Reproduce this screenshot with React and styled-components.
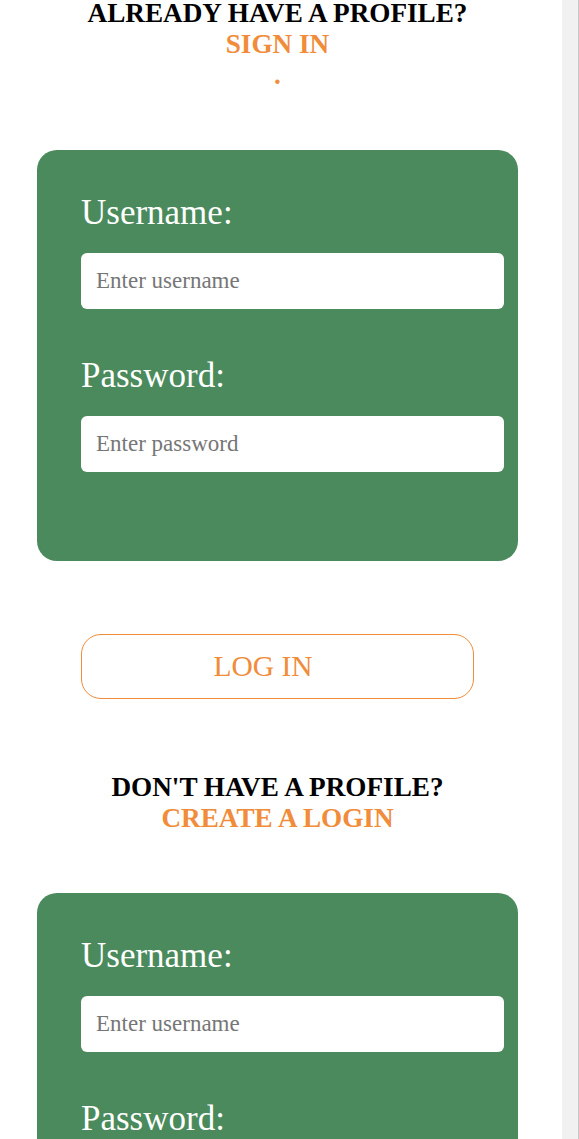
import React from "react";
import styled, { createGlobalStyle } from "styled-components";

const GlobalStyle = createGlobalStyle`
  html, body {
    margin: 0;
    padding: 0;
    background: #ffffff;
    overflow: hidden;
  }
  body {
    font-family: "Liberation Serif", "Times New Roman", serif;
  }
  * { box-sizing: border-box; }
`;

const Page = styled.div`
  display: flex;
  width: 579px;
  height: 1139px;
  overflow: hidden;
`;

const Main = styled.main`
  width: 562px;
  flex-shrink: 0;
`;

const Column = styled.div`
  width: 555px;
  display: flex;
  flex-direction: column;
  align-items: stretch;
`;

// fake scrollbar track on the right edge
const ScrollTrack = styled.div`
  width: 17px;
  flex-shrink: 0;
  background: #f1f1f1;
  border-right: 1px solid #c6c6c6;
`;

const Prompt = styled.div`
  margin-top: ${(p) => p.$top}px;
  font-size: 27.2px;
  font-weight: bold;
  text-align: center;
  color: #000000;
`;

const Question = styled.h2`
  margin: 0;
  font-size: inherit;
  line-height: 27px;
`;

const Link = styled.a`
  display: block;
  margin-top: ${(p) => (p.$gap ? 2 : 0)}px;
  line-height: 31px;
  color: #f08c3a;
  text-decoration: none;
  cursor: pointer;
`;

const Card = styled.form`
  margin: 59px 37px 0 37px;
  padding: 43px 14px 89px 44px;
  background: #4a8a5c;
  border-radius: 20px;
  display: flex;
  flex-direction: column;
`;

const Label = styled.label`
  display: block;
  font-size: 35px;
  color: #ffffff;
  margin-top: ${(p) => (p.$first ? 0 : 47)}px;
`;

const Input = styled.input`
  display: block;
  width: 100%;
  height: 56px;
  margin-top: 20px;
  padding: 0 15px;
  border: none;
  border-radius: 6px;
  background: #ffffff;
  font-family: "Liberation Serif", "Times New Roman", serif;
  font-size: 23px;
  color: #222;
  outline: none;

  &::placeholder {
    color: #767676;
  }
`;

const LoginButton = styled.button`
  margin: 73px 81px 0 81px;
  height: 65px;
  padding: 0 29px 0 0;
  border: 1px solid #f08c3a;
  border-radius: 20px;
  background: #ffffff;
  color: #f08c3a;
  font-family: "Liberation Serif", "Times New Roman", serif;
  font-size: 29.5px;
  text-align: center;
  cursor: pointer;
`;

const LoginForm = () => (
  <Card onSubmit={(e) => e.preventDefault()}>
    <Label $first>Username:</Label>
    <Input type="text" placeholder="Enter username" />
    <Label>Password:</Label>
    <Input type="password" placeholder="Enter password" />
  </Card>
);

export default function App() {
  return (
    <>
      <GlobalStyle />
      <Page>
        <Main>
          <Column>
            <Prompt $top={0}>
              <Question>ALREADY HAVE A PROFILE?</Question>
              <Link $gap>SIGN IN</Link>
              <Link>.</Link>
            </Prompt>
            <LoginForm />
            <LoginButton type="button">LOG IN</LoginButton>
            <Prompt $top={75}>
              <Question>DON'T HAVE A PROFILE?</Question>
              <Link $gap>CREATE A LOGIN</Link>
            </Prompt>
            <LoginForm />
          </Column>
        </Main>
        <ScrollTrack />
      </Page>
    </>
  );
}
